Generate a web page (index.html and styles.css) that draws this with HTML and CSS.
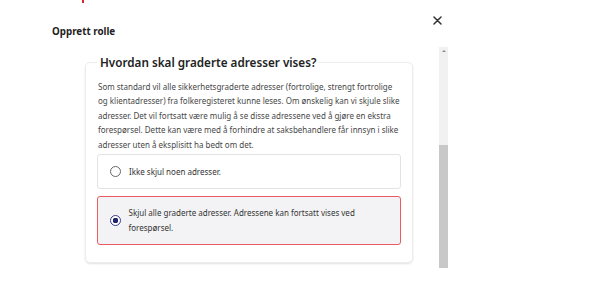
FILE: index.html
```html
<!DOCTYPE html>
<html lang="no">
<head>
<meta charset="utf-8">
<title>Opprett rolle</title>
<link rel="stylesheet" href="styles.css">
</head>
<body>
<div class="topbar"><span class="brand-mark"></span></div>
<div class="modal">
  <div class="modal-head">
    <h1 class="modal-title">Opprett rolle</h1>
    <button class="close-btn" aria-label="Lukk">
      <svg width="9" height="9" viewBox="0 0 9 9"><path d="M1 1 L8 8 M8 1 L1 8" stroke="#333" stroke-width="1.5" stroke-linecap="round"/></svg>
    </button>
  </div>
  <div class="modal-body">
    <div class="scroll-area">
      <fieldset class="card">
        <legend class="card-title">Hvordan skal graderte adresser vises?</legend>
        <p class="card-text">Som standard vil alle sikkerhetsgraderte adresser (fortrolige, strengt fortrolige og klientadresser) fra folkeregisteret kunne leses. Om ønskelig kan vi skjule slike adresser. Det vil fortsatt være mulig å se disse adressene ved å gjøre en ekstra forespørsel. Dette kan være med å forhindre at saksbehandlere får innsyn i slike adresser uten å eksplisitt ha bedt om det.</p>
        <label class="option">
          <span class="radio"></span>
          <span class="option-text">Ikke skjul noen adresser.</span>
        </label>
        <label class="option option-selected">
          <span class="radio radio-checked"></span>
          <span class="option-text">Skjul alle graderte adresser. Adressene kan fortsatt vises ved forespørsel.</span>
        </label>
      </fieldset>
    </div>
    <div class="scrollbar">
      <div class="scroll-arrow"></div>
      <div class="scroll-track"></div>
      <div class="scroll-thumb"></div>
    </div>
  </div>
</div>
</body>
</html>
```
FILE: styles.css
```css
html, body {
  margin: 0;
  padding: 0;
  background: #ffffff;
}
body {
  width: 600px;
  height: 290px;
  overflow: hidden;
  font-family: "Noto Sans", Inter, "Liberation Sans", sans-serif;
  color: #222;
}
.topbar {
  height: 3px;
  padding-left: 82px;
}
.brand-mark {
  display: block;
  width: 2px;
  height: 3px;
  background: #d9232e;
}
.modal {
  margin-left: 52px;
  width: 396px;
}
.modal-head {
  display: flex;
  justify-content: space-between;
  align-items: flex-start;
  height: 44px;
}
.modal-title {
  margin: 23px 0 0;
  font-size: 9.8px;
  font-weight: 700;
  line-height: 12px;
  color: #222;
}
.close-btn {
  margin: 13px 6px 0 0;
  padding: 0;
  border: 0;
  background: transparent;
  width: 9px;
  height: 9px;
  display: flex;
}
.modal-body {
  display: flex;
  height: 221px;
}
.scroll-area {
  flex: 1;
  padding-left: 33px;
}
.card {
  margin: 8px 0 0;
  width: 328px;
  box-sizing: border-box;
  border: 1px solid #ececec;
  border-radius: 5px;
  box-shadow: 0 1px 2px rgba(0, 0, 0, 0.12);
  padding: 0 11px 17px;
  min-inline-size: 0;
}
.card-title {
  padding: 0 3px;
  font-size: 11.7px;
  font-weight: 600;
  line-height: 15px;
  color: #222;
}
.card-text {
  margin: 9.5px -1px 1.5px 1px;
  font-size: 8px;
  line-height: 14.5px;
  color: #474747;
}
.option {
  display: flex;
  align-items: center;
  gap: 8px;
  box-sizing: border-box;
  min-height: 35px;
  padding: 0 12px;
  border: 1px solid #e3e3e3;
  border-radius: 3px;
  font-size: 8px;
  line-height: 15px;
  color: #333;
}
.option + .option {
  margin-top: 7px;
}
.option-selected {
  min-height: 49px;
  border: 1.5px solid #ea5a64;
  background: #f3f3f6;
  padding-left: 11.5px;
}
.radio {
  flex: none;
  width: 11px;
  height: 11px;
  box-sizing: border-box;
  border: 1px solid #666;
  border-radius: 50%;
  background: #fff;
}
.radio-checked {
  border: 1.5px solid #3b3b8f;
  background: radial-gradient(circle, #23236f 0 2.6px, #fff 3px);
}
.scrollbar {
  width: 9px;
  display: flex;
  flex-direction: column;
  background: #f1f1f1;
  position: relative;
}
.scroll-arrow {
  height: 8px;
  position: relative;
}
.scroll-arrow::before {
  content: "";
  position: absolute;
  left: 2.5px;
  top: 3px;
  border-left: 2px solid transparent;
  border-right: 2px solid transparent;
  border-bottom: 2px solid #8a8a8a;
}
.scroll-track {
  height: 90px;
}
.scroll-thumb {
  flex: 1;
  background: #c8c8c8;
}
```
